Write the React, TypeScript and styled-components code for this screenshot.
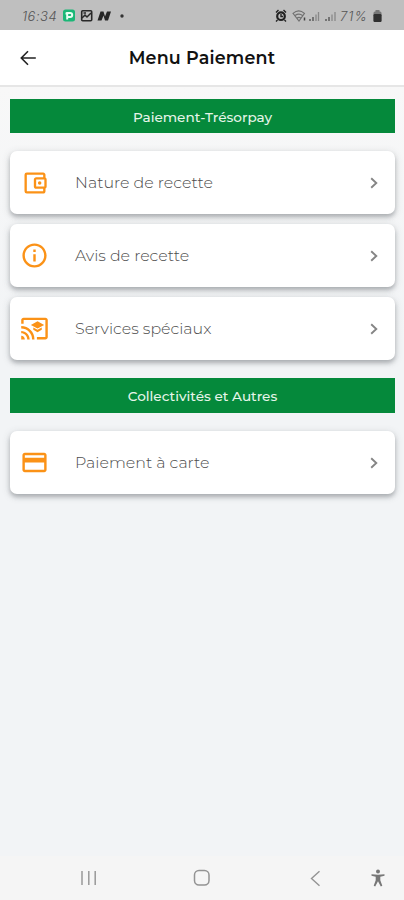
import React from "react";
import styled, { createGlobalStyle } from "styled-components";
import {
  MdOutlineAccountBalanceWallet,
  MdInfoOutline,
  MdCastForEducation,
  MdCreditCard,
} from "react-icons/md";

const GlobalStyle = createGlobalStyle`
  * { box-sizing: border-box; }
  body { margin: 0; background: #f2f4f6; }
`;

const Screen = styled.div`
  width: 404px;
  height: 900px;
  display: flex;
  flex-direction: column;
  overflow: hidden;
  background: #f2f4f6;
  font-family: Montserrat, Inter, sans-serif;
`;

const StatusBar = styled.div`
  height: 30px;
  flex: none;
  display: flex;
  align-items: center;
  justify-content: space-between;
  padding: 1px 22px 0 22px;
  background: #bfbfbf;
  color: #555;
`;

const StatusGroup = styled.div`
  display: flex;
  align-items: center;
`;

const StatusText = styled.span<{ $width: number; $spacing: number }>`
  width: ${(p) => p.$width}px;
  font: italic 300 13px/16px Inter, sans-serif;
  letter-spacing: ${(p) => p.$spacing}px;
  white-space: nowrap;
`;

const Header = styled.header`
  height: 57px;
  flex: none;
  display: grid;
  grid-template-columns: 56px 1fr 56px;
  align-items: center;
  background: #fff;
  border-bottom: 2px solid #e6e6e6;
`;

const BackButton = styled.button`
  display: flex;
  padding: 0 0 0 20px;
  border: 0;
  background: none;
`;

const Title = styled.h1`
  margin: 0;
  text-align: center;
  font-size: 17.5px;
  line-height: 24px;
  font-weight: 600;
  letter-spacing: 0.2px;
  color: #111;
  white-space: nowrap;
`;

const Content = styled.main`
  flex: 1;
  padding: 12px 9px 0 10px;
  background: linear-gradient(#f8f8f8, #f5f6f7 100px, #f2f4f6 260px);
`;

const Banner = styled.h2<{ $tall?: boolean }>`
  margin: 0;
  height: ${(p) => (p.$tall ? 35 : 34)}px;
  padding-top: 1px;
  display: flex;
  align-items: center;
  justify-content: center;
  background: #05893b;
  color: #e6f5e9;
  font-size: 13.6px;
  font-weight: 500;
`;

const CardList = styled.div`
  display: flex;
  flex-direction: column;
  gap: 10px;
  padding: 18px 0;
`;

const Card = styled.div`
  height: 63px;
  display: grid;
  grid-template-columns: 50px 1fr 27px;
  align-items: center;
  padding-left: 10px;
  border-radius: 7px;
  background: #fff;
  box-shadow: 0 3px 4px rgba(60, 66, 72, 0.3), 0 2px 8px rgba(60, 66, 72, 0.18);
`;

const CardIcon = styled.span`
  display: flex;
  width: 29px;
  justify-content: center;
  color: #fb9217;
`;

const CardLabel = styled.span`
  padding-left: 5px;
  font-size: 15.85px;
  font-weight: 300;
  line-height: 20px;
  color: #4c4c4c;
  white-space: nowrap;
`;

const NavBar = styled.nav`
  height: 44px;
  flex: none;
  background: #f5f5f5;
  display: grid;
  grid-template-columns: 146px 111px 114px 33px;
  align-items: center;
`;

const NavItem = styled.span<{ $pad: number }>`
  display: flex;
  padding-left: ${(p) => p.$pad}px;
`;

const Chevron = () => (
  <svg width="12" height="14" viewBox="0 0 12 14" fill="none" stroke="#858585" strokeWidth="1.9">
    <path d="M3.2 2.2 8.3 7 3.2 11.8" />
  </svg>
);

const NotificationIcons = () => (
  <svg width="66" height="16" viewBox="0 0 66 16">
    <rect x="0" y="1.5" width="12" height="12" rx="2.5" fill="#1bb777" />
    <path d="M4.2 11.5V5h3a2 2 0 0 1 0 4h-3M2.5 5.5h2" fill="none" stroke="#e8fff3" strokeWidth="2" />
    <rect x="18.7" y="2.7" width="10" height="10" rx="1" fill="none" stroke="#292929" strokeWidth="1.6" />
    <path d="m19 10 3-3 2 2 4-4M20.5 5h2.5" fill="none" stroke="#292929" strokeWidth="1.5" />
    <path d="m34.5 12.5 3-9h3l1.500 5 2-5h4l-3 9h-3l-1.500-5-2 5z" fill="#262626" />
    <circle cx="59" cy="8" r="1.7" fill="#333" />
  </svg>
);

const SignalIcons = () => (
  <svg width="65" height="16" viewBox="0 0 65 16" fill="none">
    <circle cx="6" cy="8.2" r="3.8" stroke="#222" strokeWidth="2.2" />
    <path d="M1 4.5 3.5 2M11 4.5 8.5 2M2.5 12 1 13.5M9.5 12l1.5 1.5M6 6v2.5h2" stroke="#222" strokeWidth="1.4" />
    <path d="M18 5.3c3.5-3 8-3 11.5 0L24 13zM20 7.5c3-2 5-2 7.5 0M22 10c1.5-1 2.5-1 4 0" stroke="#707070" strokeWidth="1.1" />
    <path d="M29.5 9.5v3" stroke="#444" strokeWidth="1.5" />
    <path d="M35 11v2M38 9v4M41 6.5V13M43.5 4v9M51 11v2M54 9v4M57 6.5V13M60 4v9" stroke="#888" strokeWidth="1.3" />
    <path d="M35 11v2M38 9v4M51 11v2M54 9v4" stroke="#606060" strokeWidth="1.3" />
  </svg>
);

const Battery = () => (
  <svg width="9" height="14" viewBox="0 0 9 14">
    <path d="M2.5 3V1h4v2" fill="#777" />
    <rect x=".5" y="2.5" width="8" height="10.5" rx="1.5" fill="#777" />
    <rect x=".5" y="5" width="8" height="8" rx="1.2" fill="#303030" />
  </svg>
);

const rows = [
  { label: "Nature de recette", icon: <MdOutlineAccountBalanceWallet size={28} /> },
  { label: "Avis de recette", icon: <MdInfoOutline size={29} /> },
  { label: "Services spéciaux", icon: <MdCastForEducation size={29} /> },
];

const MenuCard = ({ label, icon }: { label: string; icon: React.ReactNode }) => (
  <Card>
    <CardIcon>{icon}</CardIcon>
    <CardLabel>{label}</CardLabel>
    <Chevron />
  </Card>
);

export default function App() {
  return (
    <>
      <GlobalStyle />
      <Screen>
        <StatusBar>
          <StatusGroup>
            <StatusText $width={41} $spacing={0.5}>16:34</StatusText>
            <NotificationIcons />
          </StatusGroup>
          <StatusGroup>
            <SignalIcons />
            <StatusText $width={33} $spacing={1}>71%</StatusText>
            <Battery />
          </StatusGroup>
        </StatusBar>
        <Header>
          <BackButton aria-label="Retour">
            <svg width="17" height="16" viewBox="0 0 17 16" fill="none" stroke="#222" strokeWidth="1.6">
              <path d="M15.8 8H1.5M8 1.2 1.3 8 8 14.8" />
            </svg>
          </BackButton>
          <Title>Menu Paiement</Title>
        </Header>
        <Content>
          <Banner>Paiement-Trésorpay</Banner>
          <CardList>
            {rows.map((r) => (
              <MenuCard key={r.label} {...r} />
            ))}
          </CardList>
          <Banner $tall>Collectivités et Autres</Banner>
          <CardList>
            <MenuCard label="Paiement à carte" icon={<MdCreditCard size={29} />} />
          </CardList>
        </Content>
        <NavBar>
          <NavItem $pad={80}>
            <svg width="18" height="16" viewBox="0 0 18 16" stroke="#999" strokeWidth="1.5">
              <path d="M2 1v14M8.8 1v14M15.2 1v14" />
            </svg>
          </NavItem>
          <NavItem $pad={47}>
            <svg width="18" height="18" viewBox="0 0 18 18" fill="none" stroke="#939393" strokeWidth="1.5">
              <rect x="1.5" y="1.5" width="14.5" height="14.5" rx="4.5" />
            </svg>
          </NavItem>
          <NavItem $pad={53}>
            <svg width="11" height="17" viewBox="0 0 11 17" fill="none" stroke="#939393" strokeWidth="1.4">
              <path d="M9.5 1.2 1.5 8.5l8 7.3" />
            </svg>
          </NavItem>
          <NavItem $pad={0}>
            <svg width="14" height="18" viewBox="0 0 14 18" fill="#777">
              <circle cx="7" cy="2.6" r="2" />
              <path d="M.5 5.3 7 5.8l6.500-.5v1.5L9.300 7.8v3.5l2 5.5-1.500.7L7 12.300l-2.800 5.200-1.500-.7 2-5.500V7.800L.5 6.800z" />
            </svg>
          </NavItem>
        </NavBar>
      </Screen>
    </>
  );
}
